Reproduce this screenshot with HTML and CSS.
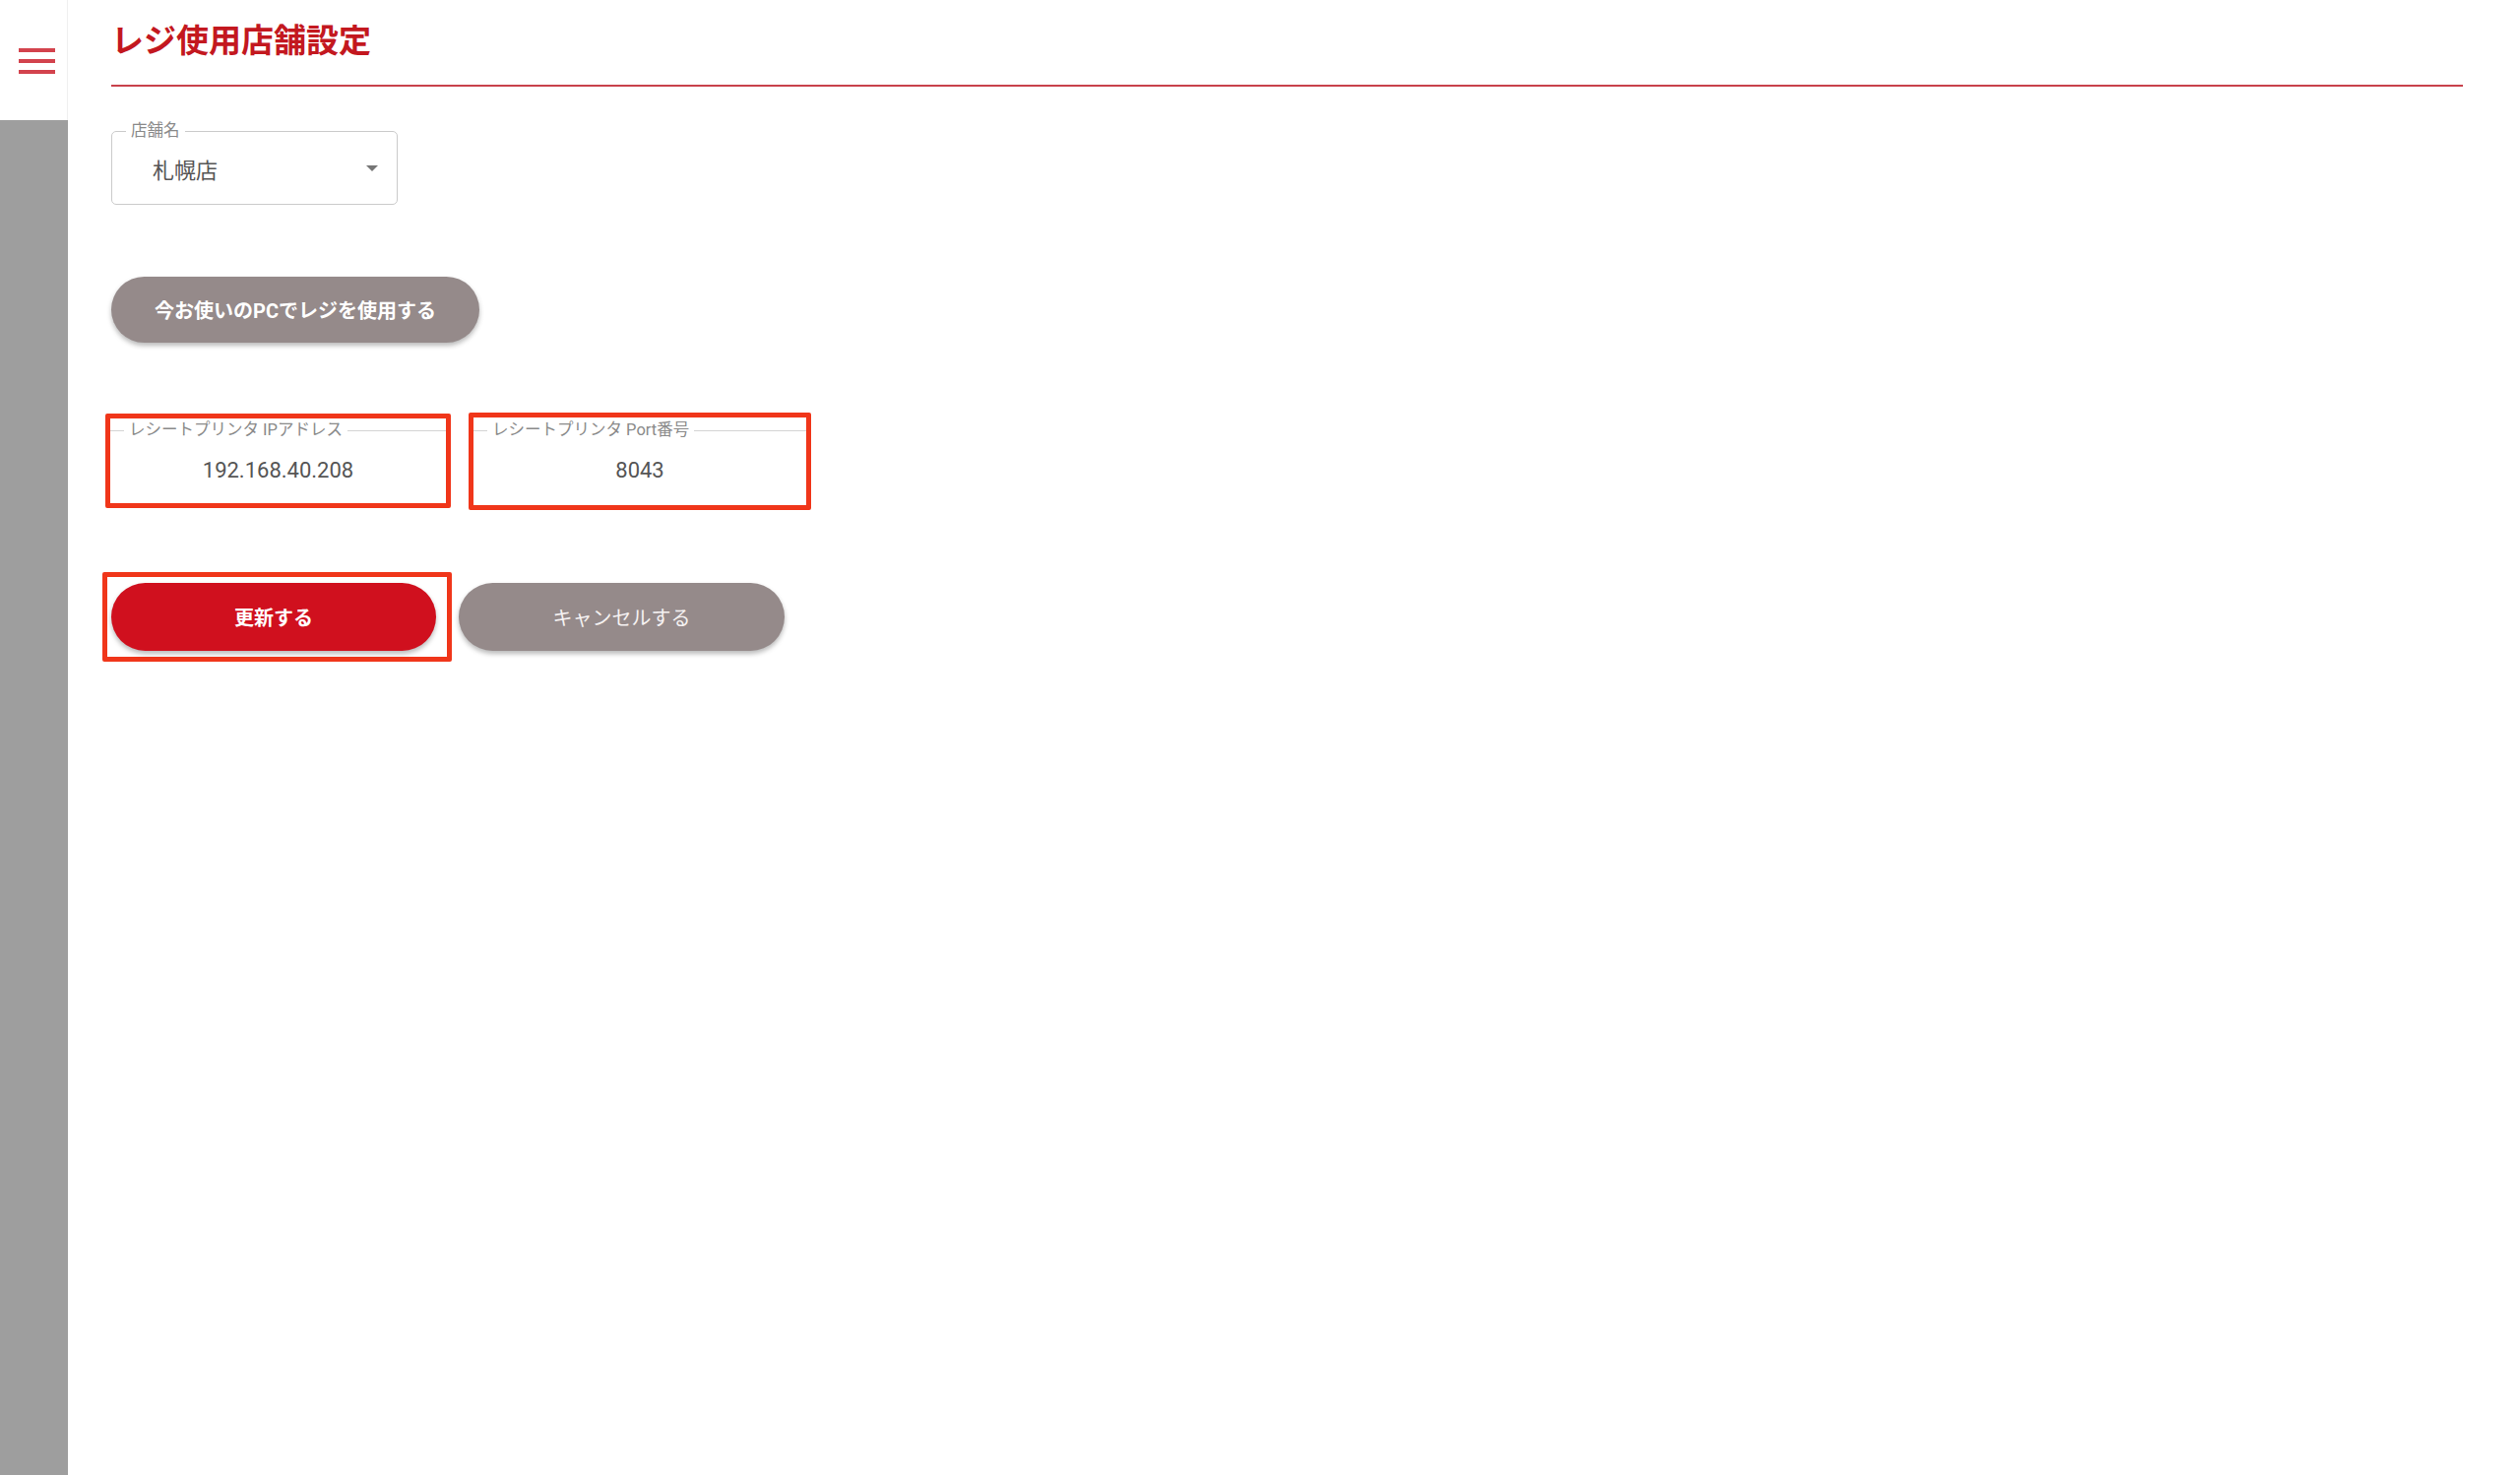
FILE: index.html
```html
<!DOCTYPE html>
<html lang="ja">
<head>
  <meta charset="utf-8" />
  <meta name="viewport" content="width=device-width" />
  <title>レジ使用店舗設定</title>
  <link rel="stylesheet" href="styles.css">
</head>
<body>
<div class="app">
  <aside class="side">
    <div class="side-top">
      <button class="menu" type="button"><span></span><span></span><span></span></button>
    </div>
    <div class="side-rest"></div>
  </aside>

  <main class="main">
    <h1 class="title">レジ使用店舗設定</h1>

    <div class="select">
      <span class="float-label">店舗名</span>
      <span class="select-value">札幌店</span>
      <span class="caret"></span>
    </div>

    <button class="btn btn-gray btn-pc" type="button">今お使いのPCでレジを使用する</button>

    <div class="printer-row">
      <div class="mark mark-ip">
        <div class="field">
          <span class="float-label">レシートプリンタ IPアドレス</span>
          <div class="field-value">192.168.40.208</div>
        </div>
      </div>
      <div class="mark mark-port">
        <div class="field">
          <span class="float-label">レシートプリンタ Port番号</span>
          <div class="field-value">8043</div>
        </div>
      </div>
    </div>

    <div class="action-row">
      <div class="mark mark-btn">
        <button class="btn btn-red" type="button">更新する</button>
      </div>
      <button class="btn btn-gray btn-cancel" type="button">キャンセルする</button>
    </div>
  </main>
</div>
</body>
</html>
```

FILE: styles.css
```css
body {
  margin: 0;
  background: #fff;
  font-family: Roboto, "Noto Sans CJK JP", sans-serif;
  color: #555;
}

.app {
  display: flex;
  min-height: 100vh;
}

/* side bar */
.side {
  width: 69px;
  flex: none;
  display: flex;
  flex-direction: column;
}
.side-top {
  height: 122px;
  background: #fff;
  border-right: 1px solid #f0f0f0;
  box-sizing: border-box;
}
.menu {
  display: flex;
  flex-direction: column;
  gap: 7px;
  margin: 49px 0 0 19px;
  padding: 0;
  border: none;
  background: none;
}
.menu span {
  display: block;
  width: 37px;
  height: 4px;
  background: #d3434d;
}
.side-rest {
  flex: 1;
  background: #9e9e9e;
}

/* main */
.main {
  flex: 1;
  padding: 18px 58px 0 44px;
}
.title {
  margin: 0;
  padding-bottom: 20px;
  border-bottom: 2px solid #c8414b;
  font-size: 33px;
  line-height: 48px;
  font-weight: 700;
  color: #c3181f;
}

.float-label {
  position: absolute;
  top: -11px;
  left: 14px;
  padding: 0 5px;
  background: #fff;
  font-size: 16.5px;
  line-height: 20px;
  color: #8a8a8a;
  white-space: nowrap;
}

.select {
  position: relative;
  display: flex;
  align-items: center;
  justify-content: space-between;
  box-sizing: border-box;
  width: 291px;
  height: 75px;
  margin-top: 45px;
  padding: 0 19px 0 41px;
  border: 1px solid #cbcbcb;
  border-radius: 5px;
}
.select-value {
  font-size: 22px;
  color: #555;
}
.caret {
  width: 0;
  height: 0;
  border-left: 6px solid transparent;
  border-right: 6px solid transparent;
  border-top: 6px solid #767676;
}

/* buttons */
.btn {
  display: block;
  border: none;
  border-radius: 36px;
  font-family: Roboto, "Noto Sans CJK JP", sans-serif;
  font-size: 20px;
  color: #fff;
  box-shadow: 0 3px 5px rgba(0, 0, 0, 0.28);
  cursor: pointer;
}
.btn-gray { background: #958a8a; }
.btn-red {
  width: 330px;
  height: 69px;
  background: #d0101e;
  font-weight: 700;
}
.btn-pc {
  width: 374px;
  height: 67px;
  margin-top: 73px;
  font-weight: 700;
}
.btn-cancel {
  width: 331px;
  height: 69px;
  margin-left: 7px;
  color: #f6f2f2;
}

/* red marks */
.mark {
  box-sizing: border-box;
  border: 5px solid #f0361a;
  border-radius: 2px;
}

.printer-row {
  display: flex;
  align-items: flex-start;
  gap: 18px;
  margin: 72px 0 0 -6px;
}
.mark-ip {
  width: 351px;
  height: 96px;
  padding-top: 12px;
}
.mark-port {
  width: 348px;
  height: 99px;
  margin-top: -1px;
  padding-top: 13px;
}
.field {
  position: relative;
  border-top: 1px solid #d4d4d4;
}
.field-value {
  margin-top: 25px;
  text-align: center;
  font-size: 22px;
  line-height: 30px;
  color: #555;
}

.action-row {
  display: flex;
  align-items: center;
  margin: 63px 0 0 -9px;
}
.mark-btn {
  padding: 6px 11px 6px 4px;
}
```
